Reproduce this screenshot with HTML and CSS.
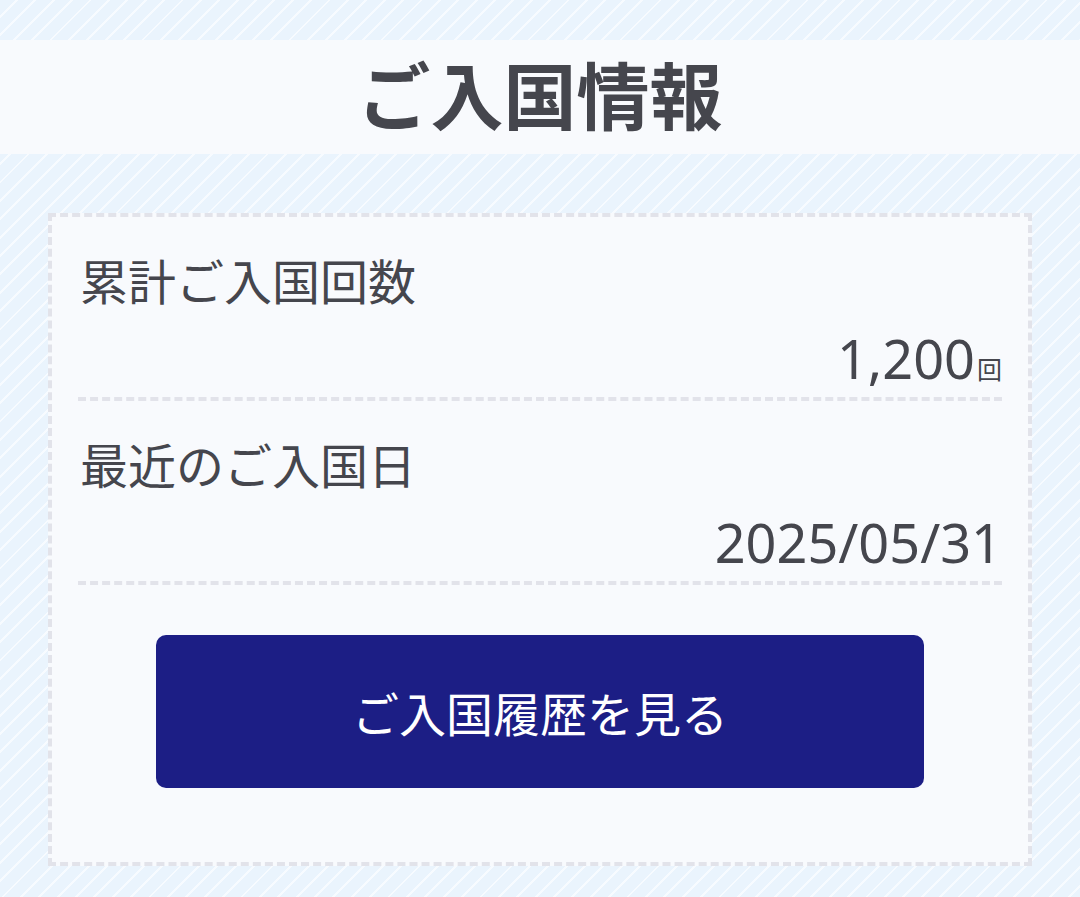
FILE: index.html
```html
<!DOCTYPE html>
<html lang="ja">
<head>
    <meta charset="utf-8">
    <meta name="viewport" content="width=device-width, initial-scale=1">
    <link rel="stylesheet" href="styles.css">
</head>
<body>

<!-- タイトル -->
<div class="header">
    <h1 class="title">ご入国情報</h1>
</div>

<!-- 情報カード -->
<div class="card">
    <div class="row">
        <div class="label">累計ご入国回数</div>
        <div class="value">1,200<span class="unit">回</span></div>
    </div>
    <div class="row">
        <div class="label">最近のご入国日</div>
        <div class="value">2025/05/31</div>
    </div>
    <div class="actions">
        <button class="historyBtn">ご入国履歴を見る</button>
    </div>
</div>

</body>
</html>
```

FILE: styles.css
```css
* {
    box-sizing: border-box;
}

body {
    margin: 0;
    min-height: 897px;
    font-family: "Noto Sans", "Noto Sans CJK JP", sans-serif;
    color: #45464d;
    background-color: #eaf4fd;
    background-image: repeating-linear-gradient(135deg, #eaf4fd 0, #eaf4fd 11px, #f7fbff 11px, #f7fbff 13px);
    padding-top: 40px;
    overflow: hidden;
}

/* タイトル帯 */
.header {
    background: #f8fafd;
    height: 114px;
    padding-bottom: 10px;
    display: flex;
    align-items: center;
    justify-content: center;
}

.title {
    margin: 0;
    font-family: "Noto Sans CJK JP", sans-serif;
    font-size: 73px;
    font-weight: 700;
    line-height: 1;
}

/* カード */
.card {
    margin: 59px 48px 0;
    background: #f8fafd;
    border: 4px dashed #e2e3ea;
    padding: 0 26px 74px;
}

.row {
    border-bottom: 4px dashed #e2e3ea;
    padding: 30px 0 7px;
}

.label {
    font-family: "Noto Sans CJK JP", sans-serif;
    font-size: 48px;
    line-height: 64px;
    padding-left: 2px;
}

.value {
    margin-top: 15px;
    text-align: right;
    font-size: 54px;
    line-height: 64px;
}

.unit {
    font-family: "Noto Sans CJK JP", sans-serif;
    font-size: 25px;
    line-height: 1;
    margin-left: 2px;
}

.actions {
    display: flex;
    justify-content: center;
    padding-top: 50px;
}

.historyBtn {
    width: 768px;
    height: 153px;
    border: none;
    border-radius: 10px;
    background: #1c1e85;
    color: #ffffff;
    font-family: "Noto Sans CJK JP", sans-serif;
    font-size: 47px;
    cursor: pointer;
}
```
